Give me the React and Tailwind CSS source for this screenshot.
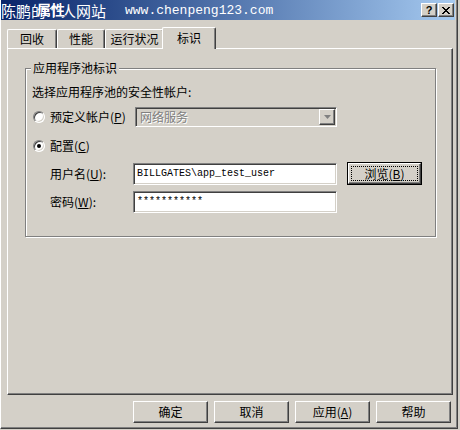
import React from 'react';

const raised =
  'border border-t-white border-l-white border-r-[#404040] border-b-[#404040] shadow-[inset_-1px_-1px_0_#808080,inset_1px_1px_0_#d4d0c8]';
const sunken =
  'border border-t-[#808080] border-l-[#808080] border-r-white border-b-white shadow-[inset_1px_1px_0_#404040,inset_-1px_-1px_0_#d4d0c8]';

const Key = ({ k }) => (
  <span>
    (<span className="underline">{k}</span>)
  </span>
);

const Radio = ({ checked }) => (
  <span className="relative w-[12px] h-[12px] rounded-full bg-white border border-t-[#808080] border-l-[#808080] border-r-white border-b-white shadow-[inset_1px_1px_0_#404040,inset_-1px_-1px_0_#d4d0c8] flex items-center justify-center">
    {checked && <span className="w-[4px] h-[4px] rounded-full bg-black" />}
  </span>
);

const Tab = ({ label, w, active }) =>
  active ? (
    <div
      className={`relative z-10 -ml-[2px] -mb-px h-[22px] ${w} bg-[#d4d0c8] border-t border-l border-r border-t-white border-l-white border-r-[#404040] shadow-[inset_-1px_0_0_#808080] rounded-t-[2px] flex items-center justify-center pb-[2px]`}
    >
      {label}
    </div>
  ) : (
    <div
      className={`h-[19px] ${w} border-t border-l border-r border-t-white border-l-white border-r-[#404040] shadow-[inset_-1px_0_0_#808080] rounded-t-[2px] flex items-center justify-center`}
    >
      {label}
    </div>
  );

const Btn = ({ children }) => (
  <button className={`w-[75px] h-[22px] bg-[#d4d0c8] ${raised} flex items-center justify-center text-[12px] text-black`}>
    {children}
  </button>
);

export default function App() {
  return (
    <div className="w-[460px] h-[430px] bg-[#d4d0c8] overflow-hidden font-['Noto_Sans_CJK_SC',sans-serif] text-[12px] text-black leading-none">
      <div className="w-[458px] h-[429px] border-l border-l-white border-r border-r-[#404040] border-b border-b-[#404040] shadow-[inset_-1px_-1px_0_#808080] flex flex-col">
        {/* title bar */}
        <div className="relative h-[20px] mr-[2px] bg-linear-to-r from-[#0a246a] to-[#a6caf0] flex items-center">
          <span className="text-white text-[15px] whitespace-nowrap">陈鹏的个人网站</span>
          <span className="absolute left-[36px] top-[2px] text-white text-[14px] font-bold [text-shadow:1px_0_0_#0a246a]">属性</span>
          <span className="ml-[19px] text-white text-[13px] font-['Liberation_Mono',monospace]">www.chenpeng123.com</span>
          <div className="ml-auto mr-[1px] flex gap-[1px]">
            <div className={`w-[16px] h-[14px] bg-[#d4d0c8] ${raised} flex items-center justify-center text-[11px] font-bold font-['Liberation_Sans',sans-serif]`}>?</div>
            <div className={`w-[16px] h-[14px] bg-[#d4d0c8] ${raised} flex items-center justify-center`}>
              <svg width="8" height="7" viewBox="0 0 8 7">
                <path d="M0 0h2v1h1v1h2V1h1V0h2v1H7v1H6v1H5v1h1v1h1v1h1v1H6V6H5V5H3v1H2v1H0V6h1V5h1V4h1V3H2V2H1V1H0z" fill="#000" />
              </svg>
            </div>
          </div>
        </div>

        {/* tabs */}
        <div className="mt-[7px] ml-[6px] flex items-end">
          <Tab label="回收" w="w-[50px]" />
          <Tab label="性能" w="w-[48px]" />
          <Tab label="运行状况" w="w-[59px]" />
          <Tab label="标识" w="w-[54px]" active />
        </div>

        {/* panel */}
        <div className="ml-[6px] w-[446px] h-[347px] border-t border-l border-t-white border-l-white border-r border-b border-r-[#404040] border-b-[#404040] shadow-[inset_-1px_-1px_0_#808080]">
          <div className="relative mt-[19px] ml-[17px] w-[411px] h-[169px] border border-[#808080] shadow-[inset_1px_1px_0_#fff,1px_1px_0_#fff]">
            <span className="absolute -top-[7px] left-[5px] px-[2px] bg-[#d4d0c8]">应用程序池标识</span>
            <div className="pl-[6px] pt-[16px] flex flex-col">
              <div className="h-[14px] flex items-center">选择应用程序池的安全性帐户:</div>

              <div className="mt-[8px] flex items-center h-[20px]">
                <span className="ml-[1px]"><Radio /></span>
                <span className="ml-[5px] w-[85px]">预定义帐户<Key k="P" /></span>
                <div className={`w-[202px] h-[20px] bg-[#d4d0c8] ${sunken} flex items-center`}>
                  <span className="ml-[4px] text-[#808080] [text-shadow:1px_1px_0_#fff]">网络服务</span>
                  <div className={`ml-auto mr-[1px] w-[16px] h-[16px] bg-[#d4d0c8] ${raised} flex items-center justify-center`}>
                    <svg width="7" height="4" viewBox="0 0 7 4">
                      <path d="M0 0h7L3.5 4z" fill="#808080" />
                    </svg>
                  </div>
                </div>
              </div>

              <div className="mt-[11px] h-[16px] flex items-center">
                <span className="ml-[1px]"><Radio checked /></span>
                <span className="ml-[5px]">配置<Key k="C" /></span>
              </div>

              <div className="mt-[8px] flex items-center">
                <span className="ml-[18px] w-[83px]">用户名<Key k="U" />:</span>
                <div className={`w-[204px] h-[22px] bg-white ${sunken} flex items-center pl-[3px] font-['Liberation_Mono',monospace] text-[10px]`}>
                  BILLGATES\app_test_user
                </div>
                <button className="ml-[10px] w-[75px] h-[23px] bg-[#d4d0c8] border border-black p-0 flex">
                  <span className={`flex-1 ${raised} flex p-[2px]`}>
                    <span className="flex-1 border border-dotted border-black flex items-center justify-center">浏览<Key k="B" /></span>
                  </span>
                </button>
              </div>

              <div className="mt-[6px] flex items-center">
                <span className="ml-[18px] w-[83px]">密码<Key k="W" />:</span>
                <div className={`w-[204px] h-[22px] bg-white ${sunken} flex items-center pl-[3px] font-['Liberation_Mono',monospace] text-[10px]`}>
                  ***********
                </div>
              </div>
            </div>
          </div>
        </div>

        {/* bottom buttons */}
        <div className="mt-[6px] pr-[6px] flex justify-end gap-[6px]">
          <Btn>确定</Btn>
          <Btn>取消</Btn>
          <Btn>应用<Key k="A" /></Btn>
          <Btn>帮助</Btn>
        </div>
      </div>
    </div>
  );
}
